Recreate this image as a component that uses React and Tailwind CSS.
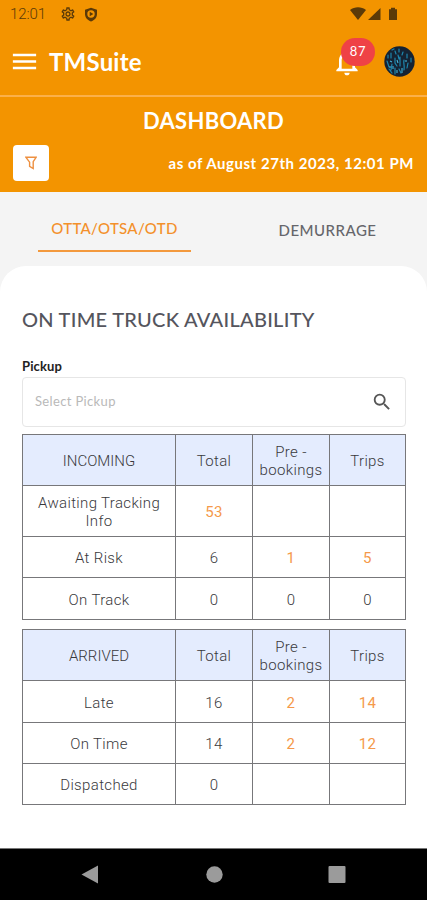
import React from 'react';
import { MdMenu, MdNotificationsNone, MdOutlineSettings, MdSearch } from 'react-icons/md';

const INCOMING = {
  title: 'INCOMING',
  rows: [
    { label: 'Awaiting Tracking Info', height: 'h-[51px]', total: '53', pre: '', trips: '', link: ['total'] },
    { label: 'At Risk', height: 'h-[41px]', total: '6', pre: '1', trips: '5', link: ['pre', 'trips'] },
    { label: 'On Track', height: 'h-[42px]', total: '0', pre: '0', trips: '0', link: [] },
  ],
};

const ARRIVED = {
  title: 'ARRIVED',
  rows: [
    { label: 'Late', height: 'h-[42px]', total: '16', pre: '2', trips: '14', link: ['pre', 'trips'] },
    { label: 'On Time', height: 'h-[41px]', total: '14', pre: '2', trips: '12', link: ['pre', 'trips'] },
    { label: 'Dispatched', height: 'h-[41px]', total: '0', pre: '', trips: '', link: [] },
  ],
};

function ShieldIcon() {
  return (
    <svg width="14" height="15" viewBox="0 0 14 15" className="text-[#5b3a08]">
      <path d="M7 0.7 L13 2.7 V7 C13 10.7 10.4 13.3 7 14.4 C3.6 13.3 1 10.7 1 7 V2.7 Z" fill="currentColor" />
      <circle cx="7" cy="7" r="3.7" fill="#f39400" />
      <path d="M5.7 4.8 L9.4 7 L5.7 9.2 Z" fill="currentColor" />
    </svg>
  );
}

function StatusBar() {
  return (
    <div className="flex h-7 items-center pr-[29px] pl-2.5 text-[#5b3a08]">
      <span className="w-[50px] font-['Roboto',sans-serif] text-[15px] font-light tracking-[-0.1px]">12:01</span>
      <MdOutlineSettings size={16} />
      <span className="ml-2"><ShieldIcon /></span>
      <svg width="48" height="14" viewBox="0 0 48 14" className="ml-auto" fill="currentColor">
        <path d="M0 3 C4.5 -0.6 11.5 -0.6 16 3 L8 13 Z" />
        <path d="M18 13 L30.5 1 V13 Z" />
        <path d="M39 2.2 h2 V0.8 h4 V2.2 h2 V13 h-8 Z" />
      </svg>
    </div>
  );
}

function Avatar() {
  return (
    <svg width="31" height="31" viewBox="0 0 31 31">
      <defs>
        <clipPath id="avatar">
          <circle cx="15.5" cy="15.5" r="15.2" />
        </clipPath>
      </defs>
      <g clipPath="url(#avatar)">
        <rect width="31" height="31" fill="#152233" />
        <g fill="none" stroke="#1d86ae" strokeWidth="1.2" strokeLinecap="round">
          <path d="M4 9 V12 M3 15 L5 21 M7 7 V12 M8 18 L7 24 M5 23 L8 27" />
          <path d="M11 5 L12 8 M11 12 V17 L13 20 M11 22 V28" />
          <path d="M15 3 V6 M16 11 V20 M15 23 L17 27 M14 9 L15 13" />
          <path d="M19 6 L18 9 M20 14 C19 18 21 19 20 24" />
          <path d="M23 8 V12 M24 17 L23 22 M27 12 V16 M8 4 L10 3" />
        </g>
        <path
          d="M6 15 L8 16 M13 14 L14 17 M9 20 V23 M18 22 V27 M22 14 V16 M6 20 V22 M13 24 V27"
          fill="none"
          stroke="#45b4da"
          strokeWidth="1.1"
        />
      </g>
    </svg>
  );
}

function AppBar() {
  return (
    <div className="flex h-[69px] items-center border-b-2 border-[#fbb04a] pr-3 pl-[9px] text-white">
      <MdMenu size={31} />
      <h1 className="ml-[9px] text-2xl font-bold tracking-[0.2px]">TMSuite</h1>
      <div className="relative mr-[23px] ml-auto h-[30px] w-[30px]">
        <MdNotificationsNone size={32} className="absolute -top-px left-0" />
        <span className="absolute -top-[9px] left-2.5 flex h-7 w-[34px] items-center justify-center rounded-full bg-[#ef4246] pt-px text-[13px] tracking-[0.6px]">
          87
        </span>
      </div>
      <Avatar />
    </div>
  );
}

function Banner() {
  return (
    <div className="h-[95px] px-[13px] pt-2 text-white">
      <h2 className="text-center text-[22px] leading-8 font-bold tracking-[0.3px]">DASHBOARD</h2>
      <div className="mt-2 flex items-center justify-between">
        <button type="button" className="flex h-9 w-9 items-center justify-center rounded bg-white">
          <svg width="12" height="15" viewBox="0 0 12 15" fill="none" stroke="#ee9040" strokeWidth="1.4">
            <path d="M0.8 1.2 H11.2 L8.2 5.6 V12.6 L4.6 10.4 V6.2 Z" />
          </svg>
        </button>
        <p className="text-[15px] font-bold whitespace-nowrap tracking-[0.54px]">as of August 27th 2023, 12:01 PM</p>
      </div>
    </div>
  );
}

function Tabs() {
  return (
    <div className="flex h-[74px] justify-between bg-[#f4f4f4] pr-[23px] pl-[38px]">
      <button type="button" className="h-[60px] w-[153px] border-b-2 border-[#f3993d] pt-3.5 text-[15px] font-medium tracking-[0.3px] text-[#f3902b]">
        OTTA/OTSA/OTD
      </button>
      <button type="button" className="h-[61px] w-[153px] pt-[15px] text-[15px] font-medium tracking-[0.5px] text-[#66666b]">DEMURRAGE</button>
    </div>
  );
}

function Cell({ value, link }) {
  return (
    <td className={`border border-[#77777a] p-0 pt-0.5 ${link ? 'font-normal text-[#f5994a]' : ''}`}>{value}</td>
  );
}

function StatTable({ title, rows }) {
  return (
    <table className="w-[384px] table-fixed border-collapse text-center font-['Roboto',sans-serif] text-[15px] leading-[18px] font-light tracking-[0.35px] text-[#39393c]">
      <colgroup>
        <col className="w-[153px]" />
        <col className="w-[77px]" />
        <col className="w-[77px]" />
        <col className="w-[76px]" />
      </colgroup>
      <thead>
        <tr className="h-[51px] bg-[#e4ecfe]">
          <th className="border border-[#77777a] p-0 pt-0.5 font-light tracking-normal">{title}</th>
          <th className="border border-[#77777a] p-0 pt-0.5 font-light">Total</th>
          <th className="border border-[#77777a] p-0 pt-0.5 font-light">Pre -<br />bookings</th>
          <th className="border border-[#77777a] p-0 pt-0.5 font-light">Trips</th>
        </tr>
      </thead>
      <tbody>
        {rows.map((row) => (
          <tr key={row.label} className={row.height}>
            <td className="border border-[#77777a] px-3 pt-0.5 pb-0">{row.label}</td>
            <Cell value={row.total} link={row.link.includes('total')} />
            <Cell value={row.pre} link={row.link.includes('pre')} />
            <Cell value={row.trips} link={row.link.includes('trips')} />
          </tr>
        ))}
      </tbody>
    </table>
  );
}

function NavBar() {
  return (
    <div className="flex h-[52px] items-center justify-center border-t border-[#777] bg-black">
      <svg width="266" height="20" viewBox="0 0 266 20" fill="#9b9b9b">
        <path d="M0.5 9.5 L17 0.5 V18.5 Z" />
        <circle cx="133.5" cy="9.5" r="8.2" />
        <rect x="247.5" y="1" width="17" height="17" rx="1" />
      </svg>
    </div>
  );
}

export default function App() {
  return (
    <div className="flex h-[900px] w-[427px] flex-col overflow-hidden bg-[#f4f4f4] font-['Lato',sans-serif]">
      <header className="bg-[#f39400]">
        <StatusBar />
        <AppBar />
        <Banner />
      </header>
      <Tabs />
      <main className="flex-1 rounded-t-[26px] bg-white px-[22px] pt-[39px]">
        <h3 className="text-xl leading-7 font-medium tracking-[0.27px] text-[#55555d]">ON TIME TRUCK AVAILABILITY</h3>
        <p className="mt-[23px] text-[13px] leading-5 font-bold tracking-[0.1px] text-[#222]">Pickup</p>
        <div className="mt-px mb-[7px] flex h-[50px] w-[384px] items-center justify-between rounded-sm border border-[#e6e6e6] pr-3 pl-3">
          <span className="text-[13px] tracking-[0.35px] text-[#b9b9b9]">Select Pickup</span>
          <MdSearch size={22} className="text-[#555]" />
        </div>
        <StatTable title={INCOMING.title} rows={INCOMING.rows} />
        <div className="h-[9px]" />
        <StatTable title={ARRIVED.title} rows={ARRIVED.rows} />
      </main>
      <NavBar />
    </div>
  );
}
